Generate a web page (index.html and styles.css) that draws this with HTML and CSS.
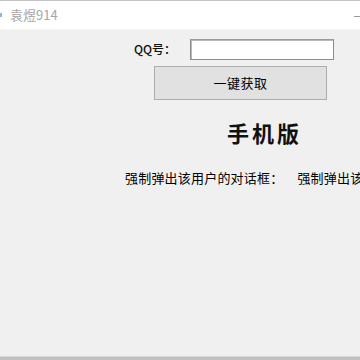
FILE: index.html
```html
<!DOCTYPE html>
<html lang="zh">
<head>
<meta charset="utf-8">
<link rel="stylesheet" href="styles.css">
</head>
<body>
<div class="window">
  <div class="titlebar">
    <span class="icon-edge"></span>
    <span class="title">袁煜914</span>
    <span class="min-btn"></span>
  </div>
  <div class="content">
    <div class="row-qq">
      <label class="qq-label">QQ号：</label>
      <div class="qq-input"></div>
    </div>
    <div class="row-btn">
      <div class="btn">一键获取</div>
    </div>
    <div class="heading">手机版</div>
    <div class="line">
      <span class="cap">强制弹出该用户的对话框：</span><span class="cap2">强制弹出该用户的对话框</span>
    </div>
  </div>
  <div class="bottom-edge"></div>
</div>
</body>
</html>
```
FILE: styles.css
```css
html, body {
  margin: 0;
  padding: 0;
  width: 360px;
  height: 360px;
  overflow: hidden;
  background: #f0f0f0;
}
.window {
  width: 360px;
  height: 360px;
  display: flex;
  flex-direction: column;
  font-family: "Noto Sans CJK SC", "Liberation Sans", sans-serif;
  color: #000;
}
.titlebar {
  height: 28px;
  flex: 0 0 28px;
  background: #ffffff;
  border-top: 1px solid #c4c4c4;
  display: flex;
  align-items: center;
  box-sizing: content-box;
}
.icon-edge {
  width: 2px;
  height: 4px;
  background: #8fb4d8;
  margin-right: 8px;
}
.title {
  font-size: 13px;
  color: #a6a6a6;
  line-height: 16px;
}
.min-btn {
  margin-left: auto;
  width: 6px;
  height: 1px;
  background: #9a9a9a;
  margin-top: 2px;
}
.content {
  flex: 1 1 auto;
  background: #f0f0f0;
  overflow: hidden;
  border-top: 1px solid #f3f3f3;
}
.row-qq {
  display: flex;
  align-items: center;
  margin-top: 8px;
  margin-left: 134px;
  height: 22px;
}
.qq-label {
  width: 56px;
  font-size: 12px;
  font-weight: 500;
  line-height: 14px;
  color: #111;
}
.qq-input {
  width: 142px;
  height: 19px;
  background: #fff;
  border: 1px solid #8c8c8c;
  border-top-color: #9a9a9a;
  box-shadow: inset 1px 1px 0 #b8b8b8;
}
.row-btn {
  margin-top: 6px;
  margin-left: 154px;
}
.btn {
  width: 171px;
  height: 32px;
  background: #e1e1e1;
  border: 1px solid #adadad;
  font-size: 13px;
  line-height: 32px;
  text-align: center;
  color: #000;
  letter-spacing: 0.5px;
}
.heading {
  margin-top: 19px;
  margin-left: 227px;
  font-size: 22px;
  font-weight: bold;
  line-height: 26px;
  letter-spacing: 3px;
  color: #111;
}
.line {
  margin-top: 25px;
  margin-left: 125px;
  white-space: nowrap;
  font-size: 13px;
  line-height: 16px;
  letter-spacing: 0.2px;
}
.cap2 {
  margin-left: 14px;
}
.bottom-edge {
  height: 3px;
  flex: 0 0 3px;
  background: #c0c0c0;
  border-top: 1px solid #d8d8d8;
}
```
